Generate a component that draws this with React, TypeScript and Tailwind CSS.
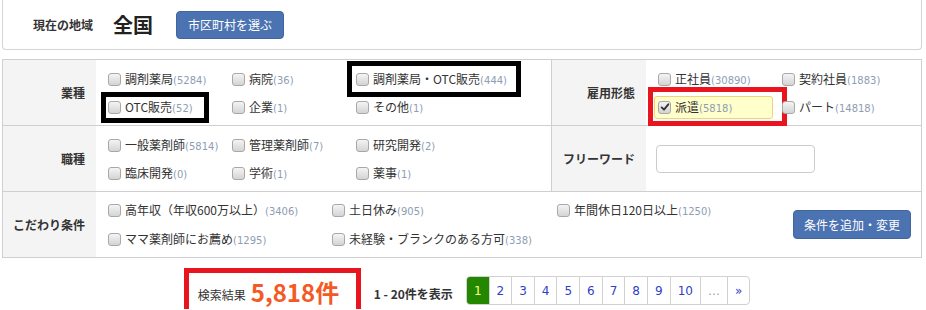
import React from 'react';

type Item = { label: string; count: number; checked?: boolean };

const Checkbox: React.FC<{ checked?: boolean }> = ({ checked }) => (
    <span className="flex-none w-[13px] h-[13px] rounded-[3px] border border-[#a8a8a8] bg-gradient-to-b from-[#f4f4f4] to-[#d4d4d4] flex items-center justify-center">
        {checked && (
            <svg viewBox="0 0 12 12" className="w-[10px] h-[10px]">
                <path d="M2 6.5 L4.8 9.2 L10 2.8" fill="none" stroke="#333" strokeWidth="2.2" strokeLinecap="round" strokeLinejoin="round" />
            </svg>
        )}
    </span>
);

const Option: React.FC<{ item: Item; box?: string }> = ({ item, box }) => (
    <div className="relative h-full flex items-center pl-[6px]">
        {box && <span className={box} />}
        <label
            className={`flex items-center gap-[4px] whitespace-nowrap ${item.checked
                ? '-ml-[4px] pl-[3px] pr-[4px] h-[23px] w-[119px] rounded-[3px] border border-[#efd27a] bg-[#ffffcc]'
                : ''
                }`}
        >
            <Checkbox checked={item.checked} />
            <span className="text-[12px] text-[#333]">
                {item.label}
                <span className="text-[10px] text-[#8e9db3] font-['DejaVu_Sans',sans-serif]">({item.count})</span>
            </span>
        </label>
    </div>
);

const Label: React.FC<{ text: string; className?: string }> = ({ text, className }) => (
    <div className={`flex items-center justify-end pr-[11px] bg-[#f4f4f4] text-[12px] font-bold text-[#333] ${className ?? ''}`}>
        {text}
    </div>
);

const pages = ['1', '2', '3', '4', '5', '6', '7', '8', '9', '10', '…', '»'];

export default function App() {
    return (
        <div className="w-[926px] h-[310px] overflow-hidden bg-white font-['Noto_Sans_CJK_JP',sans-serif] text-[#333]">
            {/* current area */}
            <div className="ml-[2px] w-[920px] h-[50px] border-x border-b border-[#d4d4d4] rounded-b-[4px] flex items-center pl-[30px]">
                <span className="text-[12px] font-bold">現在の地域</span>
                <span className="ml-[20px] text-[20px] font-bold text-[#222]">全国</span>
                <button className="ml-[23px] h-[28px] px-[11px] rounded-[4px] bg-[#4b72b1] border border-[#41669f] text-white text-[12px]">
                    市区町村を選ぶ
                </button>
            </div>

            {/* search table */}
            <div className="mt-[9px] ml-[2px] w-[920px] border border-[#cfcfcf]">
                {/* row 1 */}
                <div className="flex h-[66px] border-b border-[#cfcfcf]">
                    <Label text="業種" className="w-[93px]" />
                    <div className="w-[455px] pl-[6px] py-[5px] grid grid-cols-[124px_124px_124px] grid-rows-[28px_28px]">
                        <Option item={{ label: '調剤薬局', count: 5284 }} />
                        <Option item={{ label: '病院', count: 36 }} />
                        <Option
                            item={{ label: '調剤薬局・OTC販売', count: 444 }}
                            box="absolute -left-[3px] -top-[4px] w-[174px] h-[36px] border-[5px] border-black pointer-events-none"
                        />
                        <Option
                            item={{ label: 'OTC販売', count: 52 }}
                            box="absolute -left-[1px] -top-[1px] w-[108px] h-[31px] border-[5px] border-black pointer-events-none"
                        />
                        <Option item={{ label: '企業', count: 1 }} />
                        <Option item={{ label: 'その他', count: 1 }} />
                    </div>
                    <Label text="雇用形態" className="w-[95px] border-l border-[#cfcfcf]" />
                    <div className="flex-1 pl-[6px] py-[5px] grid grid-cols-[124px_124px] grid-rows-[28px_28px]">
                        <Option item={{ label: '正社員', count: 30890 }} />
                        <Option item={{ label: '契約社員', count: 1883 }} />
                        <Option
                            item={{ label: '派遣', count: 5818, checked: true }}
                            box="absolute -left-[4px] -top-[6px] w-[139px] h-[39px] border-[5px] border-[#e8141e] pointer-events-none"
                        />
                        <Option item={{ label: 'パート', count: 14818 }} />
                    </div>
                </div>

                {/* row 2 */}
                <div className="flex h-[66px] border-b border-[#cfcfcf]">
                    <Label text="職種" className="w-[93px]" />
                    <div className="w-[455px] pl-[6px] py-[5px] grid grid-cols-[124px_124px_124px] grid-rows-[28px_28px]">
                        <Option item={{ label: '一般薬剤師', count: 5814 }} />
                        <Option item={{ label: '管理薬剤師', count: 7 }} />
                        <Option item={{ label: '研究開発', count: 2 }} />
                        <Option item={{ label: '臨床開発', count: 0 }} />
                        <Option item={{ label: '学術', count: 1 }} />
                        <Option item={{ label: '薬事', count: 1 }} />
                    </div>
                    <Label text="フリーワード" className="w-[95px] border-l border-[#cfcfcf]" />
                    <div className="flex-1 flex items-center pl-[10px]">
                        <input type="text" className="w-[159px] h-[28px] rounded-[4px] border border-[#cccccc] bg-white" />
                    </div>
                </div>

                {/* row 3 */}
                <div className="flex h-[65px]">
                    <Label text="こだわり条件" className="w-[93px]" />
                    <div className="flex-1 flex items-center pl-[6px] pr-[10px]">
                        <div className="grid grid-cols-[224px_225px_225px] grid-rows-[29px_29px]">
                            <Option item={{ label: '高年収（年収600万以上）', count: 3406 }} />
                            <Option item={{ label: '土日休み', count: 905 }} />
                            <Option item={{ label: '年間休日120日以上', count: 1250 }} />
                            <Option item={{ label: 'ママ薬剤師にお薦め', count: 1295 }} />
                            <Option item={{ label: '未経験・ブランクのある方可', count: 338 }} />
                        </div>
                        <button className="ml-auto h-[29px] px-[10px] rounded-[4px] bg-[#4b72b1] border border-[#41669f] text-white text-[12px]">
                            条件を追加・変更
                        </button>
                    </div>
                </div>
            </div>

            {/* result and pager */}
            <div className="mt-[10px] flex items-start justify-center pl-[8px]">
                <div className="w-[177px] h-[41px] border-[5px] border-b-0 border-[#e8141e] flex items-center pl-[9px] pt-[2px]">
                    <span className="text-[12px] mt-[6px]">検索結果</span>
                    <span className="ml-[5px] text-[24px] leading-[28px] font-bold text-[#f35a25]">5,818件</span>
                </div>
                <span className="ml-[13px] mt-[17px] text-[12px] font-bold text-[#333]">1 - 20件を表示</span>
                <div className="ml-[13px] mt-[8px] flex h-[29px] rounded-[4px] border border-[#d2d2d2] overflow-hidden font-['DejaVu_Sans',sans-serif] text-[12px]">
                    {pages.map((p, i) => (
                        <span
                            key={p}
                            className={`h-full flex items-center justify-center px-[7px] ${i > 0 ? 'border-l border-[#d2d2d2]' : ''} ${i === 0
                                ? 'bg-[#238700] text-[#ffff80]'
                                : p === '…'
                                    ? 'text-[#a0a0a0]'
                                    : 'text-[#2f3fc8]'
                                }`}
                        >
                            {p}
                        </span>
                    ))}
                </div>
            </div>
        </div>
    );
}
